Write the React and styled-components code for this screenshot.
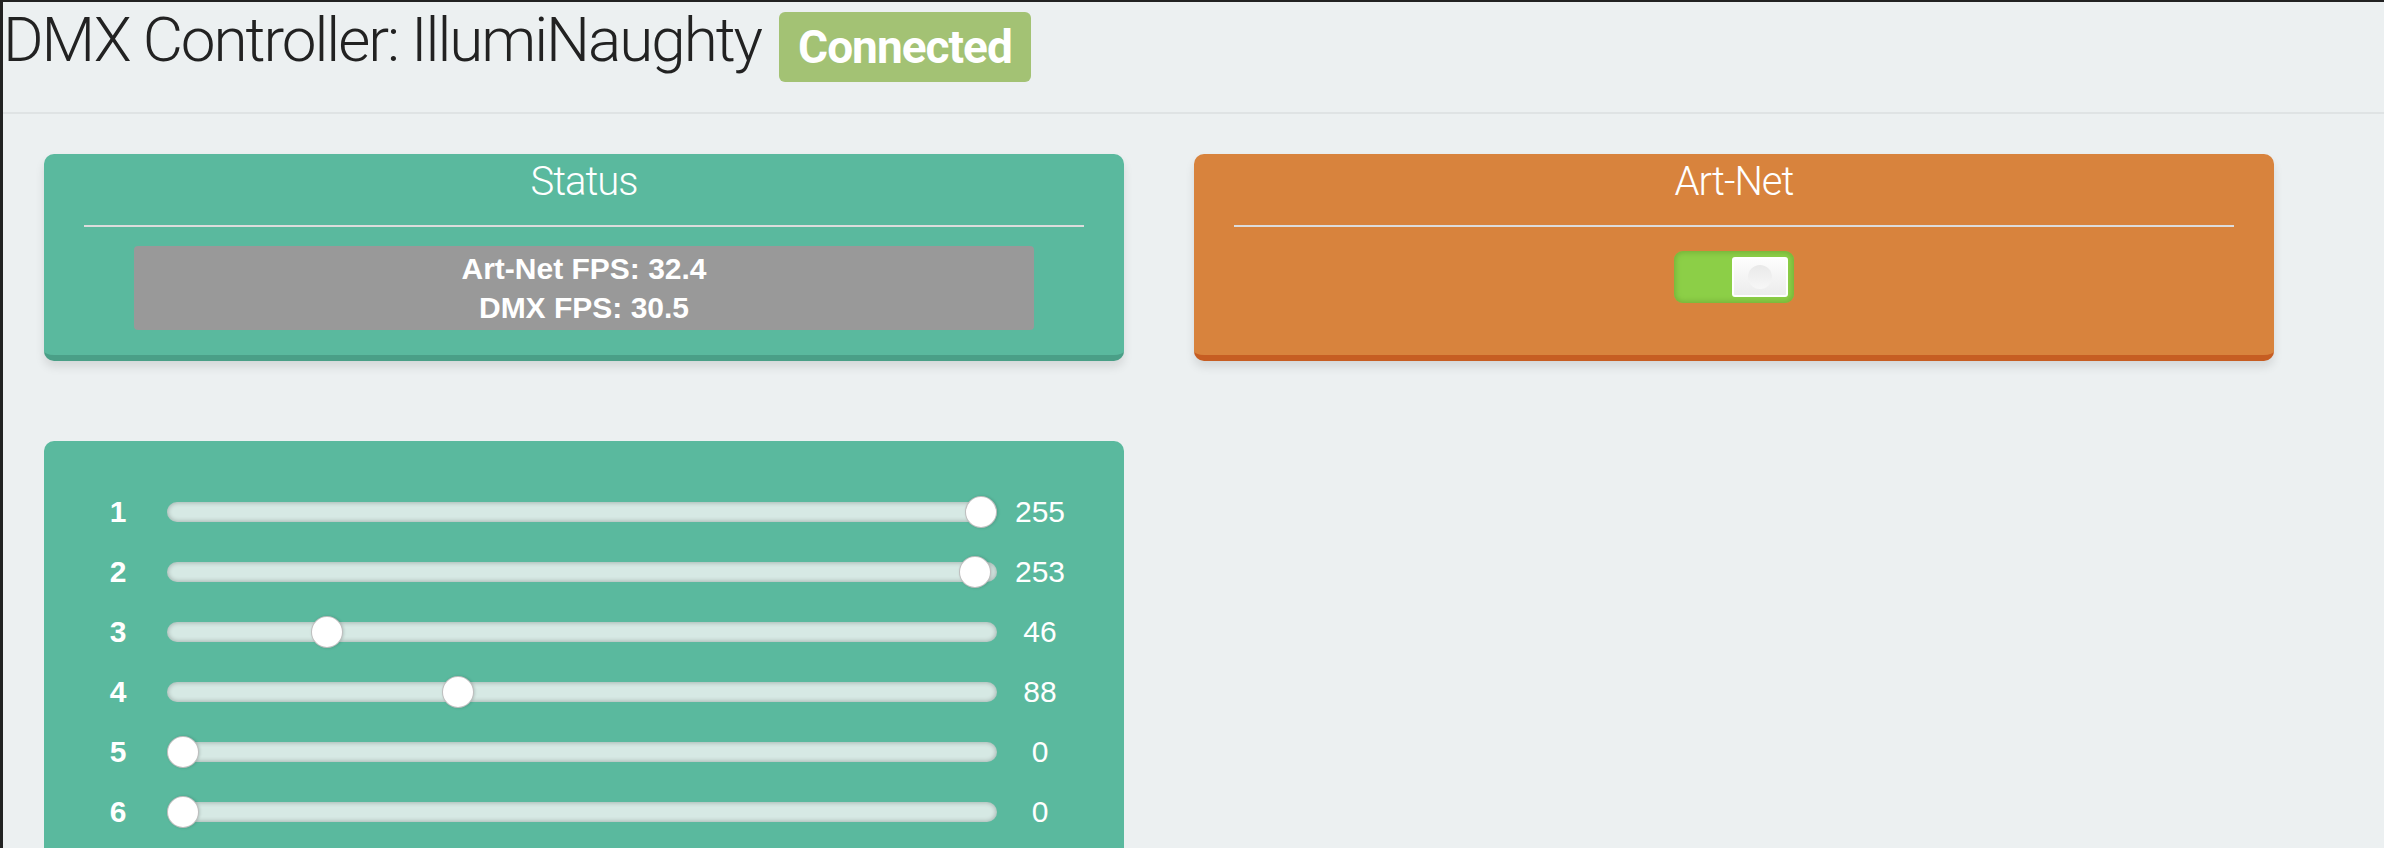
import React from "react";
import styled, { createGlobalStyle } from "styled-components";

const Global = createGlobalStyle`
  html, body { margin: 0; padding: 0; background: #ecf0f1; }
  body { font-family: "Liberation Sans", Arial, sans-serif; overflow: hidden; }
`;

const Frame = styled.div`
  min-height: 100vh;
  box-sizing: border-box;
  border-top: 2px solid #222;
  border-left: 3px solid #222;
  background: #ecf0f1;
`;

const Header = styled.header`
  display: flex;
  align-items: flex-start;
  height: 112px;
  box-sizing: border-box;
  border-bottom: 2px solid #dfe3e4;
`;

const Title = styled.h1`
  margin: 2px 0 0 0;
  font-family: Roboto, "Liberation Sans", sans-serif;
  font-weight: 300;
  font-size: 62px;
  line-height: 72px;
  letter-spacing: -2.05px;
  color: #222;
`;

const Badge = styled.span`
  margin: 10px 0 0 18px;
  height: 70px;
  display: flex;
  align-items: center;
  padding: 0 19px;
  box-sizing: border-box;
  background: #a3c274;
  border-radius: 6px;
  color: #fff;
  font-family: Roboto, "Liberation Sans", sans-serif;
  font-weight: 700;
  font-size: 46px;
  letter-spacing: -1px;
  line-height: 1;
`;

const Content = styled.main`
  display: grid;
  grid-template-columns: 1080px 1080px;
  column-gap: 70px;
  row-gap: 80px;
  padding: 40px 0 0 41px;
  align-items: stretch;
`;

const palette = {
  green: { bg: "#5ab99e", edge: "#4a9f87" },
  orange: { bg: "#d8833d", edge: "#c65d22" },
};

const Card = styled.section`
  background: ${(p) => palette[p.$tone].bg};
  border-bottom: 6px solid ${(p) => palette[p.$tone].edge};
  border-radius: 10px;
  box-shadow: 0 6px 10px rgba(0, 0, 0, 0.1);
  padding: 4px 40px 25px;
  display: flex;
  flex-direction: column;
  align-items: center;
  color: #fff;
`;

const CardTitle = styled.h2`
  margin: 0;
  font-family: Roboto, "Liberation Sans", sans-serif;
  font-weight: 300;
  font-size: 40px;
  line-height: 48px;
  letter-spacing: -1px;
  color: #fff;
`;

const Divider = styled.hr`
  align-self: stretch;
  margin: 19px 0 0;
  border: none;
  height: 2px;
  background: #dcdcdc;
`;

const StatsBox = styled.div`
  margin-top: 19px;
  width: 90%;
  box-sizing: border-box;
  padding: 3px 0;
  background: #999;
  border-radius: 4px;
  text-align: center;
  font-weight: 700;
  font-size: 30px;
  line-height: 39px;
  color: #fff;
`;

const Toggle = styled.div`
  position: relative;
  margin-top: 24px;
  width: 120px;
  height: 52px;
  border-radius: 9px;
  background: #8ccf47;
  box-shadow: inset 0 0 5px 2px #78b43a;
`;

const Knob = styled.div`
  position: absolute;
  top: 6px;
  right: 6px;
  width: 56px;
  height: 40px;
  box-sizing: border-box;
  border-radius: 3px;
  border: 2px solid #fff;
  background: linear-gradient(#fdfdfd, #ececec);
  display: flex;
  align-items: center;
  justify-content: center;
  &::after {
    content: "";
    width: 24px;
    height: 24px;
    border-radius: 50%;
    background: linear-gradient(#e9e9e9, #f7f7f7);
  }
`;

const SliderCard = styled.section`
  grid-column: 1;
  background: #5ab99e;
  border-radius: 10px;
  padding: 54px 40px 56px;
  display: flex;
  flex-direction: column;
  gap: 28px;
`;

const Row = styled.div`
  display: grid;
  grid-template-columns: 68px 830px 56px;
  column-gap: 15px;
  align-items: center;
  height: 32px;
  color: #fff;
  font-size: 30px;
`;

const Channel = styled.span`
  text-align: center;
  font-weight: 700;
`;

const Value = styled.span`
  text-align: center;
`;

const Track = styled.div`
  position: relative;
  height: 20px;
  border-radius: 10px;
  background: #d6e9e4;
  box-shadow: inset 0 0 4px 1px rgba(0, 0, 0, 0.22);
`;

const Thumb = styled.div`
  position: absolute;
  top: -6px;
  width: 32px;
  height: 32px;
  box-sizing: border-box;
  border-radius: 50%;
  background: #fff;
  border: 1px solid rgba(0, 0, 0, 0.25);
  box-shadow: 1px 0 3px rgba(0, 0, 0, 0.15);
`;

const channels = [255, 253, 46, 88, 0, 0];

export default function App() {
  return (
    <>
      <Global />
      <Frame>
        <Header>
          <Title>DMX Controller: IllumiNaughty</Title>
          <Badge>Connected</Badge>
        </Header>
        <Content>
          <Card $tone="green">
            <CardTitle>Status</CardTitle>
            <Divider />
            <StatsBox>
              <div>Art-Net FPS: 32.4</div>
              <div>DMX FPS: 30.5</div>
            </StatsBox>
          </Card>
          <Card $tone="orange">
            <CardTitle>Art-Net</CardTitle>
            <Divider />
            <Toggle>
              <Knob />
            </Toggle>
          </Card>
          <SliderCard>
            {channels.map((v, i) => (
              <Row key={i}>
                <Channel>{i + 1}</Channel>
                <Track>
                  <Thumb style={{ left: `calc((100% - 32px) * ${v / 255})` }} />
                </Track>
                <Value>{v}</Value>
              </Row>
            ))}
          </SliderCard>
        </Content>
      </Frame>
    </>
  );
}
